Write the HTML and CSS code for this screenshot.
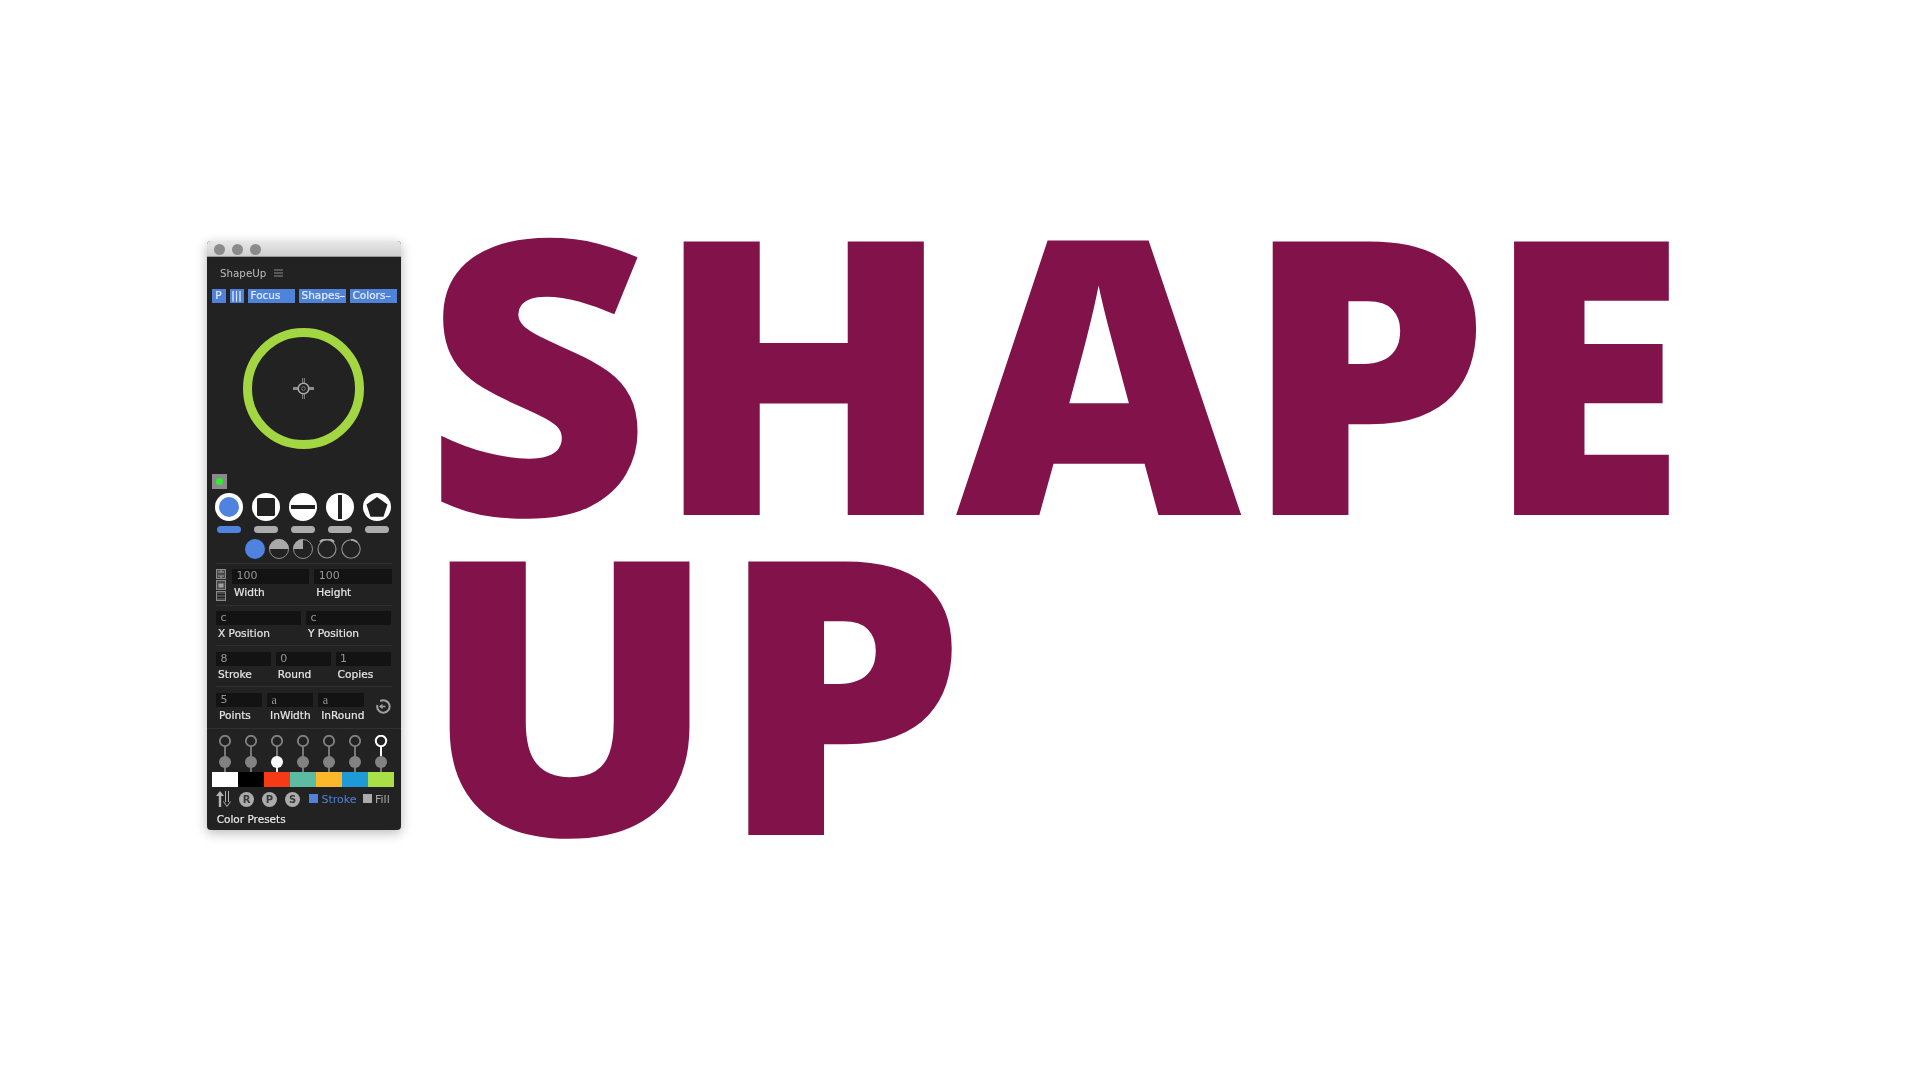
FILE: index.html
```html
<!DOCTYPE html>
<html lang="en">
<head>
<meta charset="utf-8">
<title>ShapeUp</title>
<link rel="stylesheet" href="styles.css">
</head>
<body>
<main class="stage">
  <section class="panel">
    <header class="titlebar">
      <span class="light"></span><span class="light"></span><span class="light"></span>
    </header>
    <div class="tabrow">
      <span class="tabname">ShapeUp</span>
      <svg class="menu" width="9" height="8" viewBox="0 0 9 8"><path d="M0 1h9M0 4h9M0 7h9" stroke="#8a8a8a" stroke-width="1.2"/></svg>
    </div>
    <div class="toolbar">
      <span class="btn btn-s">P</span>
      <span class="btn btn-s">|||</span>
      <span class="btn btn-focus">Focus</span>
      <span class="btn btn-w">Shapes–</span>
      <span class="btn btn-w">Colors–</span>
    </div>
    <div class="preview">
      <div class="ring">
        <svg width="21" height="21" viewBox="0 0 21 21" fill="none">
          <path d="M0 10.500h5M16 10.500h5" stroke="#8d8d8d" stroke-width="3"/>
          <path d="M9.600 0v6M11.400 0v6M9.600 15v6M11.400 15v6" stroke="#9a9a9a" stroke-width=".8"/>
          <circle cx="10.500" cy="10.500" r="5.300" stroke="#a8a8a8" stroke-width="1.600"/>
          <circle cx="10.500" cy="10.500" r="1.900" stroke="#8a8a8a" stroke-width=".8"/>
        </svg>
      </div>
    </div>
    <div class="swatchline"><span class="status"><span class="status-dot"></span></span></div>
    <div class="shapes">
      <div class="shape">
        <svg width="28" height="28" viewBox="0 0 28 28"><circle cx="14" cy="14" r="14" fill="#fff"/><circle cx="14" cy="14" r="10" fill="#5083df"/></svg>
        <span class="pill pill-on"></span>
      </div>
      <div class="shape">
        <svg width="28" height="28" viewBox="0 0 28 28"><circle cx="14" cy="14" r="14" fill="#fff"/><rect x="5" y="5" width="18" height="18" rx="1.5" fill="#222"/></svg>
        <span class="pill"></span>
      </div>
      <div class="shape">
        <svg width="28" height="28" viewBox="0 0 28 28"><circle cx="14" cy="14" r="14" fill="#fff"/><rect x="2" y="12" width="24" height="4" fill="#222"/></svg>
        <span class="pill"></span>
      </div>
      <div class="shape">
        <svg width="28" height="28" viewBox="0 0 28 28"><circle cx="14" cy="14" r="14" fill="#fff"/><rect x="12" y="2" width="4" height="24" fill="#222"/></svg>
        <span class="pill"></span>
      </div>
      <div class="shape">
        <svg width="28" height="28" viewBox="0 0 28 28"><circle cx="14" cy="14" r="14" fill="#fff"/><path d="M14 4l10.500 7.600-4 12.200H7.500l-4-12.200z" fill="#222"/></svg>
        <span class="pill"></span>
      </div>
    </div>
    <div class="arcs">
      <svg width="20" height="20" viewBox="0 0 20 20"><circle cx="10" cy="10" r="10" fill="#5083df"/></svg>
      <svg width="20" height="20" viewBox="0 0 20 20" fill="none"><circle cx="10" cy="10" r="9.500" stroke="#8f8f8f"/><path d="M0 10a10 10 0 0 1 20 0z" fill="#a8a8a8"/></svg>
      <svg width="20" height="20" viewBox="0 0 20 20" fill="none"><circle cx="10" cy="10" r="9.500" stroke="#8f8f8f"/><path d="M10 10V0A10 10 0 0 0 0 10z" fill="#a8a8a8"/></svg>
      <svg width="20" height="20" viewBox="0 0 20 20" fill="none"><circle cx="10" cy="10" r="9" stroke="#8f8f8f" stroke-width="1.200"/><path d="M2.900 2.900a10 10 0 0 1 14.200 0" stroke="#a8a8a8" stroke-width="2"/></svg>
      <svg width="20" height="20" viewBox="0 0 20 20" fill="none"><circle cx="10" cy="10" r="9.200" stroke="#8f8f8f" stroke-width="1.100"/><path d="M10 .8a9.200 9.200 0 0 1 6 2.200" stroke="#a8a8a8" stroke-width="1.800"/></svg>
    </div>
    <div class="fieldrow row-size">
      <div class="stack">
        <svg width="10" height="10" viewBox="0 0 10 10" fill="none"><rect x=".5" y=".5" width="9" height="9" fill="#4a4a4a" stroke="#8a8a8a"/><path d="M2 3h6M2 7h6M5 1v2M5 7v2" stroke="#999"/></svg>
        <svg width="10" height="10" viewBox="0 0 10 10" fill="none"><rect x=".5" y=".5" width="9" height="9" fill="#4a4a4a" stroke="#8a8a8a"/><path d="M2.500 3.500h5v4h-5z" fill="#a0a0a0"/></svg>
        <svg width="10" height="10" viewBox="0 0 10 10" fill="none"><rect x=".5" y=".5" width="9" height="9" fill="#4a4a4a" stroke="#8a8a8a"/><path d="M1 3.500h8M1 6.500h8" stroke="#222"/></svg>
      </div>
      <div class="field f-size"><span class="input">100</span><label>Width</label></div>
      <div class="field f-size"><span class="input">100</span><label>Height</label></div>
    </div>
    <div class="fieldrow row-pos">
      <div class="field f-pos"><span class="input">c</span><label>X Position</label></div>
      <div class="field f-pos"><span class="input">c</span><label>Y Position</label></div>
    </div>
    <div class="fieldrow row-stroke">
      <div class="field f-third"><span class="input">8</span><label>Stroke</label></div>
      <div class="field f-third"><span class="input">0</span><label>Round</label></div>
      <div class="field f-third"><span class="input">1</span><label>Copies</label></div>
    </div>
    <div class="fieldrow row-points">
      <div class="field f-pts"><span class="input">5</span><label>Points</label></div>
      <div class="field f-pts"><span class="input serif">a</span><label>InWidth</label></div>
      <div class="field f-pts"><span class="input serif">a</span><label>InRound</label></div>
      <svg class="reset" width="15" height="15" viewBox="0 0 15 15" fill="none"><path d="M4.200 2.200A6.200 6.200 0 1 1 1.400 6" stroke="#a0a0a0" stroke-width="2"/><path d="M4 7.500h5.500" stroke="#a0a0a0" stroke-width="1.500"/><path d="M6.500 4.800v5.400L3 7.500z" fill="#a0a0a0"/></svg>
    </div>
    <div class="pins">
      <svg class="pin" width="26" height="42" viewBox="0 0 26 42" fill="none"><circle cx="13" cy="6" r="5.200" stroke="#828282" stroke-width="1.800"/><path d="M13 11v31" stroke="#828282" stroke-width="1.800"/><circle cx="13" cy="27" r="6" fill="#828282"/></svg>
      <svg class="pin" width="26" height="42" viewBox="0 0 26 42" fill="none"><circle cx="13" cy="6" r="5.200" stroke="#828282" stroke-width="1.800"/><path d="M13 11v31" stroke="#828282" stroke-width="1.800"/><circle cx="13" cy="27" r="6" fill="#828282"/></svg>
      <svg class="pin" width="26" height="42" viewBox="0 0 26 42" fill="none"><circle cx="13" cy="6" r="5.200" stroke="#828282" stroke-width="1.800"/><path d="M13 11v16" stroke="#828282" stroke-width="1.800"/><path d="M13 27v15" stroke="#fff" stroke-width="1.800"/><circle cx="13" cy="27" r="6" fill="#fff"/></svg>
      <svg class="pin" width="26" height="42" viewBox="0 0 26 42" fill="none"><circle cx="13" cy="6" r="5.200" stroke="#828282" stroke-width="1.800"/><path d="M13 11v31" stroke="#828282" stroke-width="1.800"/><circle cx="13" cy="27" r="6" fill="#828282"/></svg>
      <svg class="pin" width="26" height="42" viewBox="0 0 26 42" fill="none"><circle cx="13" cy="6" r="5.200" stroke="#828282" stroke-width="1.800"/><path d="M13 11v31" stroke="#828282" stroke-width="1.800"/><circle cx="13" cy="27" r="6" fill="#828282"/></svg>
      <svg class="pin" width="26" height="42" viewBox="0 0 26 42" fill="none"><circle cx="13" cy="6" r="5.200" stroke="#828282" stroke-width="1.800"/><path d="M13 11v31" stroke="#828282" stroke-width="1.800"/><circle cx="13" cy="27" r="6" fill="#828282"/></svg>
      <svg class="pin" width="26" height="42" viewBox="0 0 26 42" fill="none"><circle cx="13" cy="6" r="5.200" stroke="#fff" stroke-width="2"/><path d="M13 11v10" stroke="#fff" stroke-width="2"/><path d="M13 27v15" stroke="#828282" stroke-width="1.800"/><circle cx="13" cy="27" r="6" fill="#828282"/></svg>
    </div>
    <div class="colors">
      <span class="c c1"></span><span class="c c2"></span><span class="c c3"></span><span class="c c4"></span><span class="c c5"></span><span class="c c6"></span><span class="c c7"></span>
    </div>
    <div class="modes">
      <svg class="swap" width="15" height="16" viewBox="0 0 15 16" fill="none"><path d="M4 16V3" stroke="#b5b5b5" stroke-width="2.400"/><path d="M0 5l4-5 4 5z" fill="#b5b5b5"/><path d="M9.500 0v11M12.500 0v11" stroke="#b5b5b5"/><path d="M7.500 10.500L11 15.500l3.500-5" stroke="#b5b5b5"/></svg>
      <span class="badge">R</span><span class="badge">P</span><span class="badge">S</span>
      <span class="check check-on"></span><span class="mode-on">Stroke</span>
      <span class="check"></span><span class="mode-off">Fill</span>
    </div>
    <div class="presets">Color Presets</div>
  </section>
  <h1 class="headline"><span class="line"><span class="k-s">S</span><span class="k-h">H</span><span class="k-a">A</span><span class="k-p">P</span><span class="k-e">E</span></span><span class="line line-two">UP</span></h1>
</main>
</body>
</html>
```

FILE: styles.css
```css
* { box-sizing: border-box; }
html, body { margin: 0; height: 100%; background: #fff; }
.stage {
  display: flex;
  align-items: flex-start;
  height: 1080px;
  overflow: hidden;
  padding: 241px 0 0 207px;
}
.panel {
  width: 193.500px;
  height: 589px;
  flex: none;
  background: #222;
  border-radius: 4px;
  box-shadow: 0 3px 12px rgba(0,0,0,.28);
  font-family: "DejaVu Sans", sans-serif;
  font-size: 10.5px;
  color: #e4e4e4;
  overflow: hidden;
  filter: blur(.25px);
}
.titlebar {
  height: 16px;
  padding: 1px 0 0 6.500px;
  display: flex;
  align-items: center;
  gap: 7px;
  background: linear-gradient(#e8e8e8, #cfcfcf);
  border-bottom: 1px solid #999;
}
.light { width: 11px; height: 11px; border-radius: 50%; background: #8b8b8b; }
.tabrow {
  height: 32px;
  padding-left: 13px;
  display: flex;
  align-items: center;
  gap: 8px;
  color: #bdbdbd;
}
.tabname { font-size: 10.300px; }
.toolbar { display: flex; gap: 4px; padding-left: 4.500px; height: 14px; }
.btn {
  height: 14px;
  line-height: 13px;
  background: #4f82d9;
  color: #e6edfb;
  font-size: 10.500px;
  -webkit-text-stroke: .2px #e6edfb;
  white-space: nowrap;
  overflow: hidden;
}
.btn-s { width: 14px; text-align: center; }
.btn-focus { width: 47px; padding-left: 3px; }
.btn-w { width: 47px; padding-left: 3px; }
.preview { height: 171px; display: flex; justify-content: center; padding-top: 25px; }
.ring {
  width: 121px;
  height: 121px;
  border: 9.500px solid #a2d741;
  border-radius: 50%;
  display: flex;
  align-items: center;
  justify-content: center;
}
.swatchline { height: 15px; padding-left: 4.500px; }
.status {
  display: flex;
  align-items: center;
  justify-content: center;
  width: 15px;
  height: 15px;
  background: #8a8a8a;
}
.status-dot { width: 7px; height: 7px; border-radius: 50%; background: #2bf02b; }
.shapes { display: flex; gap: 13px; padding: 4px 0 0 10.300px; }
.shape { width: 24px; display: flex; flex-direction: column; align-items: center; }
.shape svg { margin: 0 -2px; flex: none; }
.pill { width: 24px; height: 7px; border-radius: 4px; background: #ababab; margin-top: 5px; }
.pill-on { background: #5083df; }
.arcs { display: flex; gap: 4px; padding: 6px 0 0 38.300px; height: 30px; }
.fieldrow {
  display: flex;
  margin: 0 9px;
  border-top: 1px solid #303030;
}
.field { display: flex; flex-direction: column; }
.input {
  display: block;
  height: 14.500px;
  line-height: 14px;
  background: #131313;
  color: #969696;
  padding-left: 4.500px;
  font-size: 11px;
}
.serif { font-family: "Liberation Serif", serif; font-size: 12px; }
.field label { line-height: 17px; padding-left: 2px; font-size: 10.600px; color: #e6e6e6; -webkit-text-stroke: .2px #e6e6e6; white-space: nowrap; }
.row-size { height: 41.500px; padding-top: 5px; gap: 5px; }
.stack { width: 11px; display: flex; flex-direction: column; gap: 1px; }
.stack svg { display: block; }
.f-size { width: 77.500px; }
.row-pos { height: 40px; padding-top: 5px; gap: 5px; }
.f-pos { width: 85px; }
.row-stroke { height: 41.500px; padding-top: 6px; gap: 4.500px; }
.f-third { width: 55.300px; }
.row-points { height: 42px; padding-top: 5.500px; gap: 5px; align-items: flex-start; }
.f-pts { width: 47.300px; }
.field.f-pts label { padding-left: 3px; }
.reset { margin: 6.500px 0 0 7px; flex: none; }
.pins { display: flex; padding-left: 5.300px; border-top: 1px solid #303030; height: 44px; padding-top: 6px; }
.pin { display: block; flex: none; }
.colors { display: flex; padding-left: 5.300px; height: 15px; }
.c { width: 26px; }
.c1 { background: #fff; }
.c2 { background: #000; }
.c3 { background: #f63a17; }
.c4 { background: #5bbba3; }
.c5 { background: #fdb72b; }
.c6 { background: #1e9bd7; }
.c7 { background: #a9e046; }
.modes { display: flex; align-items: center; height: 24px; padding-left: 9px; font-size: 11px; }
.swap { margin-right: 8px; flex: none; }
.badge {
  width: 15px;
  height: 15px;
  border-radius: 50%;
  background: #ababab;
  color: #3a3a3a;
  font-size: 10px;
  font-weight: 700;
  line-height: 15px;
  text-align: center;
  margin-right: 8px;
}
.check { width: 9px; height: 9px; background: #ababab; margin-right: 3px; flex: none; position: relative; top: -1px; }
.check-on { background: #4f82d9; margin-left: .5px; margin-right: 4px; }
.mode-on { color: #4f82d9; width: 41.500px; }
.mode-off { color: #ababab; }
.presets { padding: 1px 0 0 9.700px; color: #eee; font-size: 10.500px; line-height: 14px; -webkit-text-stroke: .15px #eee; }
.headline {
  margin: -34px 0 0 23.500px;
  font-family: "Open Sans", "Liberation Sans", sans-serif;
  font-weight: 800;
  font-size: 383px;
  line-height: 319.500px;
  color: #82134a;
  white-space: nowrap;
  transform: scaleX(1.025);
  transform-origin: left top;
}
.line { display: block; }
.line-two { margin-left: -3px; }
.k-s { letter-spacing: 2.700px; }
.k-h { letter-spacing: 2px; }
.k-a { letter-spacing: 1.200px; }
.k-p { letter-spacing: -4.800px; }
.k-e { display: inline-block; transform: scaleX(.93); transform-origin: left center; }
```
